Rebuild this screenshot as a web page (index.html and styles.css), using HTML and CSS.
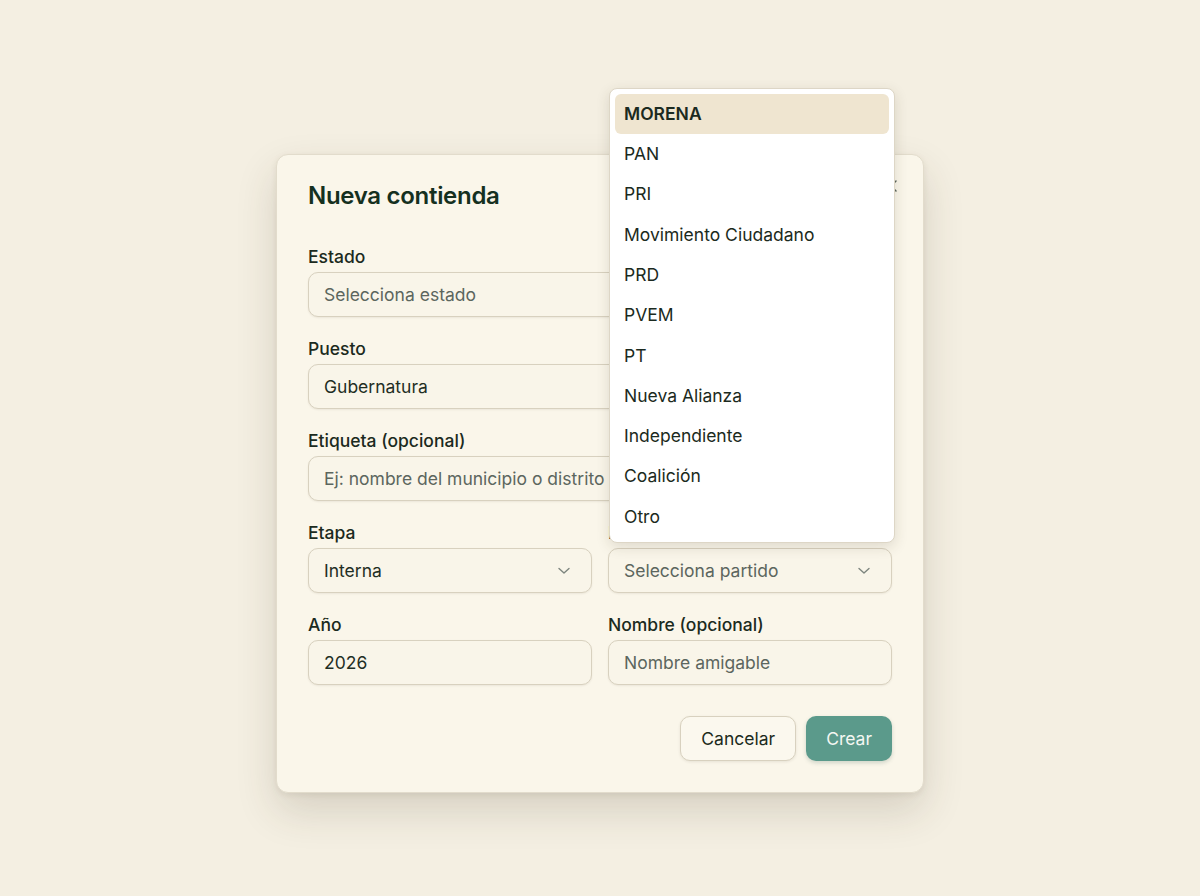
FILE: index.html
```html
<!DOCTYPE html>
<html lang="es">
<head>
  <meta charset="UTF-8">
  <meta name="viewport" content="width=device-width, initial-scale=1.0">
  <title>Nueva contienda</title>
  <link rel="stylesheet" href="styles.css">
</head>
<body>
  <div class="overlay">
    <div class="modal">
      <button class="close" title="Cerrar">
        <svg width="14" height="14" viewBox="0 0 14 14"><path d="M2 2 L12 12 M12 2 L2 12" stroke="#59635b" stroke-width="1.5" stroke-linecap="round" fill="none"/></svg>
      </button>
      <h2 class="modal-title">Nueva contienda</h2>

      <div class="form">
        <div class="field full">
          <label>Estado</label>
          <div class="input placeholder">Selecciona estado</div>
        </div>
        <div class="field full">
          <label>Puesto</label>
          <div class="input">Gubernatura</div>
        </div>
        <div class="field full">
          <label>Etiqueta (opcional)</label>
          <div class="input placeholder">Ej: nombre del municipio o distrito</div>
        </div>
        <div class="field">
          <label>Etapa</label>
          <div class="input select">
            Interna
            <svg class="chev" width="14" height="8" viewBox="0 0 14 8"><path d="M2 1.5 L7 6 L12 1.5" stroke="#7d857e" stroke-width="1.4" fill="none" stroke-linecap="round" stroke-linejoin="round"/></svg>
          </div>
        </div>
        <div class="field">
          <label>Partido</label>
          <div class="input select placeholder open">
            Selecciona partido
            <svg class="chev" width="14" height="8" viewBox="0 0 14 8"><path d="M2 1.5 L7 6 L12 1.5" stroke="#7d857e" stroke-width="1.4" fill="none" stroke-linecap="round" stroke-linejoin="round"/></svg>
            <ul class="menu">
              <li class="active">MORENA</li>
              <li>PAN</li>
              <li>PRI</li>
              <li>Movimiento Ciudadano</li>
              <li>PRD</li>
              <li>PVEM</li>
              <li>PT</li>
              <li>Nueva Alianza</li>
              <li>Independiente</li>
              <li>Coalición</li>
              <li>Otro</li>
            </ul>
          </div>
        </div>
        <div class="field">
          <label>Año</label>
          <div class="input">2026</div>
        </div>
        <div class="field">
          <label>Nombre (opcional)</label>
          <div class="input placeholder">Nombre amigable</div>
        </div>
      </div>

      <div class="actions">
        <button class="btn btn-ghost">Cancelar</button>
        <button class="btn btn-primary">Crear</button>
      </div>
    </div>
  </div>
</body>
</html>
```

FILE: styles.css
```css
* {
  margin: 0;
  padding: 0;
  box-sizing: border-box;
  font-family: Inter, "Noto Sans", sans-serif;
}

body {
  min-height: 100vh;
  background-color: #f4efe2;
  color: #1b2a20;
}

.overlay {
  display: flex;
  justify-content: center;
  padding-top: 154px;
}

/* Modal */
.modal {
  position: relative;
  width: 648px;
  padding: 26px 31px 31px;
  background-color: #faf6ea;
  border: 1px solid #e2dccc;
  border-radius: 12px;
  box-shadow: 0 18px 40px rgba(60, 50, 30, 0.16), 0 2px 6px rgba(60, 50, 30, 0.08);
}

.close {
  position: absolute;
  top: 24px;
  right: 25px;
  width: 14px;
  height: 14px;
  border: none;
  background: none;
  cursor: pointer;
}

.modal-title {
  font-size: 24px;
  font-weight: 600;
  color: #15301f;
  letter-spacing: -0.3px;
  line-height: 30px;
  margin-bottom: 35px;
}

.form {
  display: grid;
  grid-template-columns: 1fr 1fr;
  column-gap: 16px;
  row-gap: 21px;
}

.field {
  display: flex;
  flex-direction: column;
  gap: 4px;
}

.field.full {
  grid-column: span 2;
}

.field label {
  font-size: 17.5px;
  font-weight: 500;
  line-height: 22px;
  color: #1b2a20;
}

.input {
  position: relative;
  display: flex;
  align-items: center;
  height: 45px;
  padding: 0 15px;
  font-size: 17.5px;
  color: #1f2e24;
  background-color: #f9f5e9;
  border: 1px solid #d8d1bf;
  border-radius: 10px;
  box-shadow: 0 1px 2px rgba(60, 50, 30, 0.08);
}

.input.placeholder {
  color: #5c665e;
}

.select .chev {
  position: absolute;
  right: 20px;
  top: 18px;
}

/* Partido dropdown */
.menu {
  position: absolute;
  left: 0;
  bottom: 49px;
  width: 286px;
  padding: 5px;
  list-style: none;
  background-color: #fff;
  border: 1px solid #ddd6c6;
  border-radius: 8px;
  box-shadow: 0 4px 14px rgba(60, 50, 30, 0.14);
  z-index: 10;
}

.menu li {
  height: 40.3px;
  line-height: 40px;
  padding: 0 9px;
  font-size: 17.5px;
  color: #1b2a20;
  border-radius: 6px;
}

.menu li.active {
  background-color: #efe5d0;
  font-weight: 600;
}

/* Footer */
.actions {
  display: flex;
  justify-content: flex-end;
  gap: 10px;
  margin-top: 31px;
}

.btn {
  height: 45px;
  padding: 0 20px;
  font-size: 17.5px;
  border-radius: 10px;
  cursor: pointer;
}

.btn-ghost {
  background-color: #fbf8ee;
  color: #1b2a20;
  border: 1px solid #d8d1bf;
  box-shadow: 0 1px 3px rgba(60, 50, 30, 0.1);
}

.btn-primary {
  background-color: #5b9a8b;
  color: #f4f7f2;
  border: none;
  box-shadow: 0 2px 4px rgba(40, 80, 70, 0.2);
}
```
